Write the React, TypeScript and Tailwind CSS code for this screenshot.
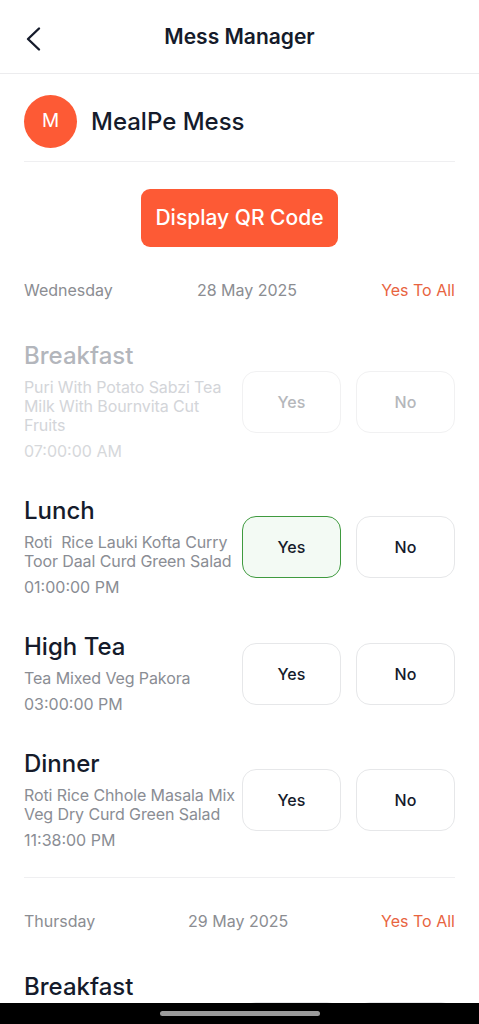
type Meal = {
  name: string;
  items: string;
  time: string;
  state: "disabled" | "yes" | "none";
};

type Day = { weekday: string; date: string; meals: Meal[] };

const days: Day[] = [
  {
    weekday: "Wednesday",
    date: "28 May 2025",
    meals: [
      {
        name: "Breakfast",
        items: "Puri With Potato Sabzi Tea Milk With Bournvita Cut Fruits",
        time: "07:00:00 AM",
        state: "disabled",
      },
      {
        name: "Lunch",
        items: "Roti  Rice Lauki Kofta Curry Toor Daal Curd Green Salad",
        time: "01:00:00 PM",
        state: "yes",
      },
      {
        name: "High Tea",
        items: "Tea Mixed Veg Pakora",
        time: "03:00:00 PM",
        state: "none",
      },
      {
        name: "Dinner",
        items: "Roti Rice Chhole Masala Mix Veg Dry Curd Green Salad",
        time: "11:38:00 PM",
        state: "none",
      },
    ],
  },
  {
    weekday: "Thursday",
    date: "29 May 2025",
    meals: [
      {
        name: "Breakfast",
        items: "Puri With Potato Sabzi Tea Milk With Bournvita Cut Fruits",
        time: "07:00:00 AM",
        state: "none",
      },
    ],
  },
];

function MealRow({ meal }: { meal: Meal }) {
  const off = meal.state === "disabled";
  return (
    <div className="flex items-center py-[18px]">
      <div className="flex-1 min-w-0">
        <div
          className={`text-[24px] leading-[28px] font-medium ${off ? "text-[#b3b6bc]" : "text-[#151b2b]"}`}
        >
          {meal.name}
        </div>
        <div
          className={`mt-[8px] text-[16px] leading-[19px] tracking-[-0.1px] whitespace-pre-wrap ${off ? "text-[#d3d5d9]" : "text-[#8a8d94]"}`}
        >
          {meal.items}
        </div>
        <div
          className={`mt-[6px] text-[16px] leading-[20px] ${off ? "text-[#d6d8db]" : "text-[#8a8d94]"}`}
        >
          {meal.time}
        </div>
      </div>
      <div className="flex gap-[15px] shrink-0">
        <button
          className={`w-[99px] h-[62px] rounded-[14px] text-[16px] font-medium ${
            meal.state === "yes"
              ? "border-[1.5px] border-[#3f9a3f] bg-[#f3faf4] text-[#151b2b]"
              : off
                ? "border border-[#f1f1f2] text-[#b5b7bb]"
                : "border border-[#e6e7e9] text-[#151b2b]"
          }`}
        >
          Yes
        </button>
        <button
          className={`w-[99px] h-[62px] rounded-[14px] text-[16px] font-medium border ${
            off
              ? "border-[#f1f1f2] text-[#b5b7bb]"
              : "border-[#e6e7e9] text-[#151b2b]"
          }`}
        >
          No
        </button>
      </div>
    </div>
  );
}

export default function App() {
  return (
    <div
      className="h-[1024px] w-[479px] flex flex-col bg-white overflow-hidden"
      style={{ fontFamily: "Inter, 'Noto Sans', sans-serif" }}
    >
      <header className="relative h-[74px] shrink-0 flex items-center justify-center border-b border-[#ececee]">
        <button className="absolute left-[24px] top-[26px] text-[#151b2b]">
          <svg width="20" height="26" viewBox="0 0 20 26" fill="none">
            <polyline
              points="15,2.5 4,13 15,23.5"
              stroke="currentColor"
              strokeWidth="2.4"
              strokeLinecap="round"
              strokeLinejoin="round"
            />
          </svg>
        </button>
        <h1 className="text-[21px] font-semibold text-[#151b2b]">
          Mess Manager
        </h1>
      </header>

      <main className="flex-1 overflow-hidden px-6">
        <div className="flex items-center gap-[14px] pt-[21px] pb-[13px] border-b border-[#efeff1]">
          <div className="w-[53px] h-[53px] rounded-full bg-[#fd5a35] flex items-center justify-center text-white text-[19px]">
            M
          </div>
          <div className="text-[24px] font-medium text-[#151b2b]">
            MealPe Mess
          </div>
        </div>

        <div className="flex justify-center mt-[27px]">
          <button className="w-[197px] h-[58px] rounded-[9px] bg-[#fd5a35] text-white text-[21px] font-medium">
            Display QR Code
          </button>
        </div>

        {days.map((day, i) => (
          <section
            key={day.date}
            className={i === 0 ? "pb-[9px] border-b border-[#efeff1]" : ""}
          >
            <div className="flex items-center justify-between pt-[33px] pb-6 text-[16px] leading-[20px]">
              <span className="text-[#8b8d92]">{day.weekday}</span>
              <span className="text-[#8b8d92]">{day.date}</span>
              <span className="text-[#e8643f]">Yes To All</span>
            </div>
            {day.meals.map((m) => (
              <MealRow key={m.name} meal={m} />
            ))}
          </section>
        ))}
      </main>

      <div className="h-[21px] shrink-0 bg-black flex items-center justify-center">
        <div className="w-[160px] h-[5px] rounded-full bg-[#9b9b9b]" />
      </div>
    </div>
  );
}
